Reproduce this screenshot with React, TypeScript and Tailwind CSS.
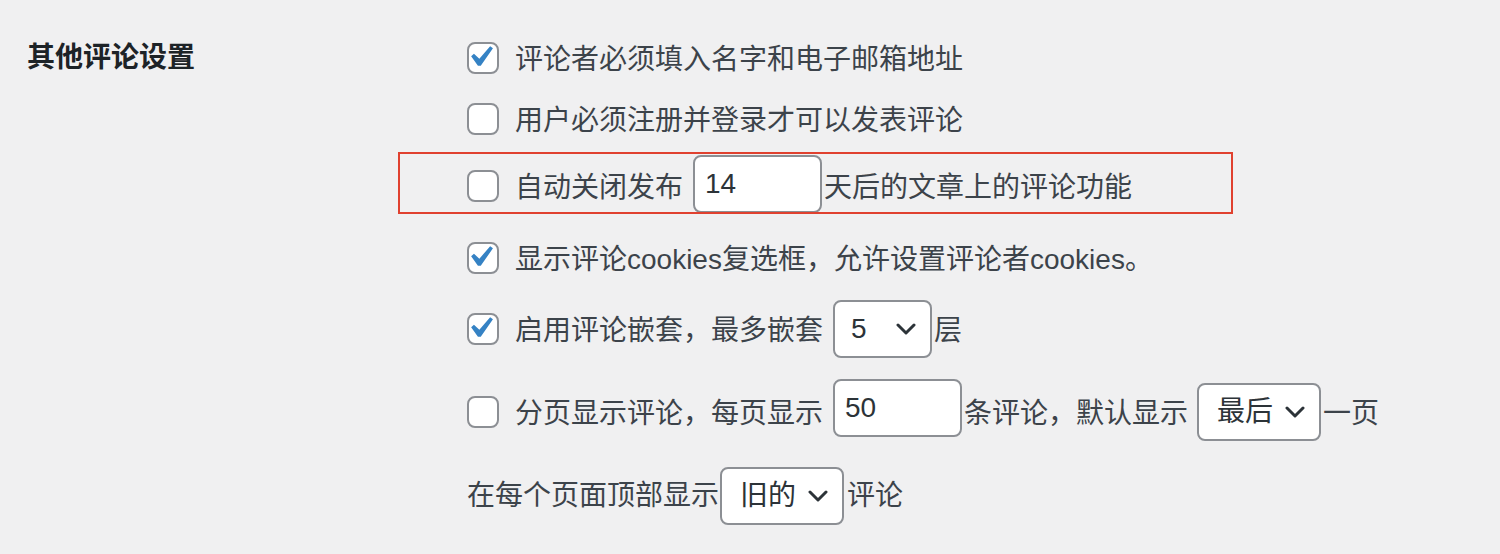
import React from "react";

const FONT = { fontFamily: '"Liberation Sans", "Noto Sans CJK SC", sans-serif' };

function Checkbox({ checked }: { checked?: boolean }) {
  return (
    <span className="relative inline-block w-[32px] h-[32px] shrink-0 rounded-[8px] border-2 border-[#8c8f94] bg-white">
      {checked && (
        <svg
          viewBox="0 0 20 20"
          className="absolute left-[-10px] top-[-8px] w-[42px] h-[42px]"
        >
          <path
            d="M14.83 4.89l1.34.94-5.81 8.38H9.02L5.78 9.67l1.34-1.25 2.57 2.4z"
            fill="#3582c4"
          />
        </svg>
      )}
    </span>
  );
}

function TextInput({ value, className = "" }: { value: string; className?: string }) {
  return (
    <span
      className={`inline-flex items-center h-[58px] w-[129px] shrink-0 rounded-[8px] border-2 border-[#8c8f94] bg-white pl-[10px] text-[28px] text-[#2c3338] ${className}`}
    >
      {value}
    </span>
  );
}

function Chevron() {
  return (
    <svg viewBox="0 0 20 12" className="w-[20px] h-[12px] shrink-0">
      <path d="M2 2l8 8 8-8" fill="none" stroke="#2c3338" strokeWidth="3" strokeLinecap="round" strokeLinejoin="round" />
    </svg>
  );
}

function Select({ value, className = "", gap = "gap-[12px]" }: { value: string; className?: string; gap?: string }) {
  return (
    <span
      className={`inline-flex items-center h-[58px] shrink-0 rounded-[8px] border-2 border-[#8c8f94] bg-white pl-[16px] ${gap} text-[28px] text-[#2c3338] ${className}`}
    >
      <span>{value}</span>
      <Chevron />
    </span>
  );
}

function Label({ children, className = "" }: { children: React.ReactNode; className?: string }) {
  return <span className={`pt-[4px] ${className}`}>{children}</span>;
}

export default function App() {
  return (
    <div className="min-h-[554px] w-[1500px] bg-[#f0f0f1] text-[#3c434a] leading-[1.4]" style={FONT}>
      <div className="flex">
        <div className="w-[467px] shrink-0 pl-[27px] pt-[28px]">
          <div className="h-[60px] flex items-center text-[28px] font-bold text-[#1d2327]">其他评论设置</div>
        </div>
        <div className="flex flex-col pt-[28px] text-[28px]">
          <div className="h-[60px] flex items-center">
            <Checkbox checked />
            <Label className="ml-[16px]">评论者必须填入名字和电子邮箱地址</Label>
          </div>
          <div className="h-[62px] flex items-center">
            <Checkbox />
            <Label className="ml-[16px]">用户必须注册并登录才可以发表评论</Label>
          </div>
          <div className="relative h-[72px] flex items-center">
            <div className="absolute left-[-69px] top-[2px] w-[835px] h-[62px] border-2 border-[#e0412f]" />
            <Checkbox />
            <Label className="ml-[16px]">自动关闭发布</Label>
            <TextInput value="14" className="ml-[10px] mb-[4px]" />
            <Label className="ml-[2px]">天后的文章上的评论功能</Label>
          </div>
          <div className="h-[72px] flex items-center">
            <Checkbox checked />
            <Label className="ml-[16px]">显示评论cookies复选框，允许设置评论者cookies。</Label>
          </div>
          <div className="h-[70px] flex items-center">
            <Checkbox checked />
            <Label className="ml-[16px]">启用评论嵌套，最多嵌套</Label>
            <Select value="5" className="ml-[10px] w-[99px] pl-[14px]" gap="gap-[29px]" />
            <Label className="ml-[2px]">层</Label>
          </div>
          <div className="h-[96px] flex items-center">
            <Checkbox />
            <Label className="ml-[16px]">分页显示评论，每页显示</Label>
            <TextInput value="50" className="ml-[10px] mb-[8px]" />
            <Label className="ml-[2px]">条评论，默认显示</Label>
            <Select value="最后" className="ml-[9px] w-[124px] pl-[18px]" gap="gap-[12px]" />
            <Label className="ml-[2px]">一页</Label>
          </div>
          <div className="h-[72px] flex items-center">
            <span>在每个页面顶部显示</span>
            <Select value="旧的" className="ml-[1px] w-[124px] pl-[18px]" gap="gap-[12px]" />
            <span className="ml-[3px]">评论</span>
          </div>
        </div>
      </div>
    </div>
  );
}
